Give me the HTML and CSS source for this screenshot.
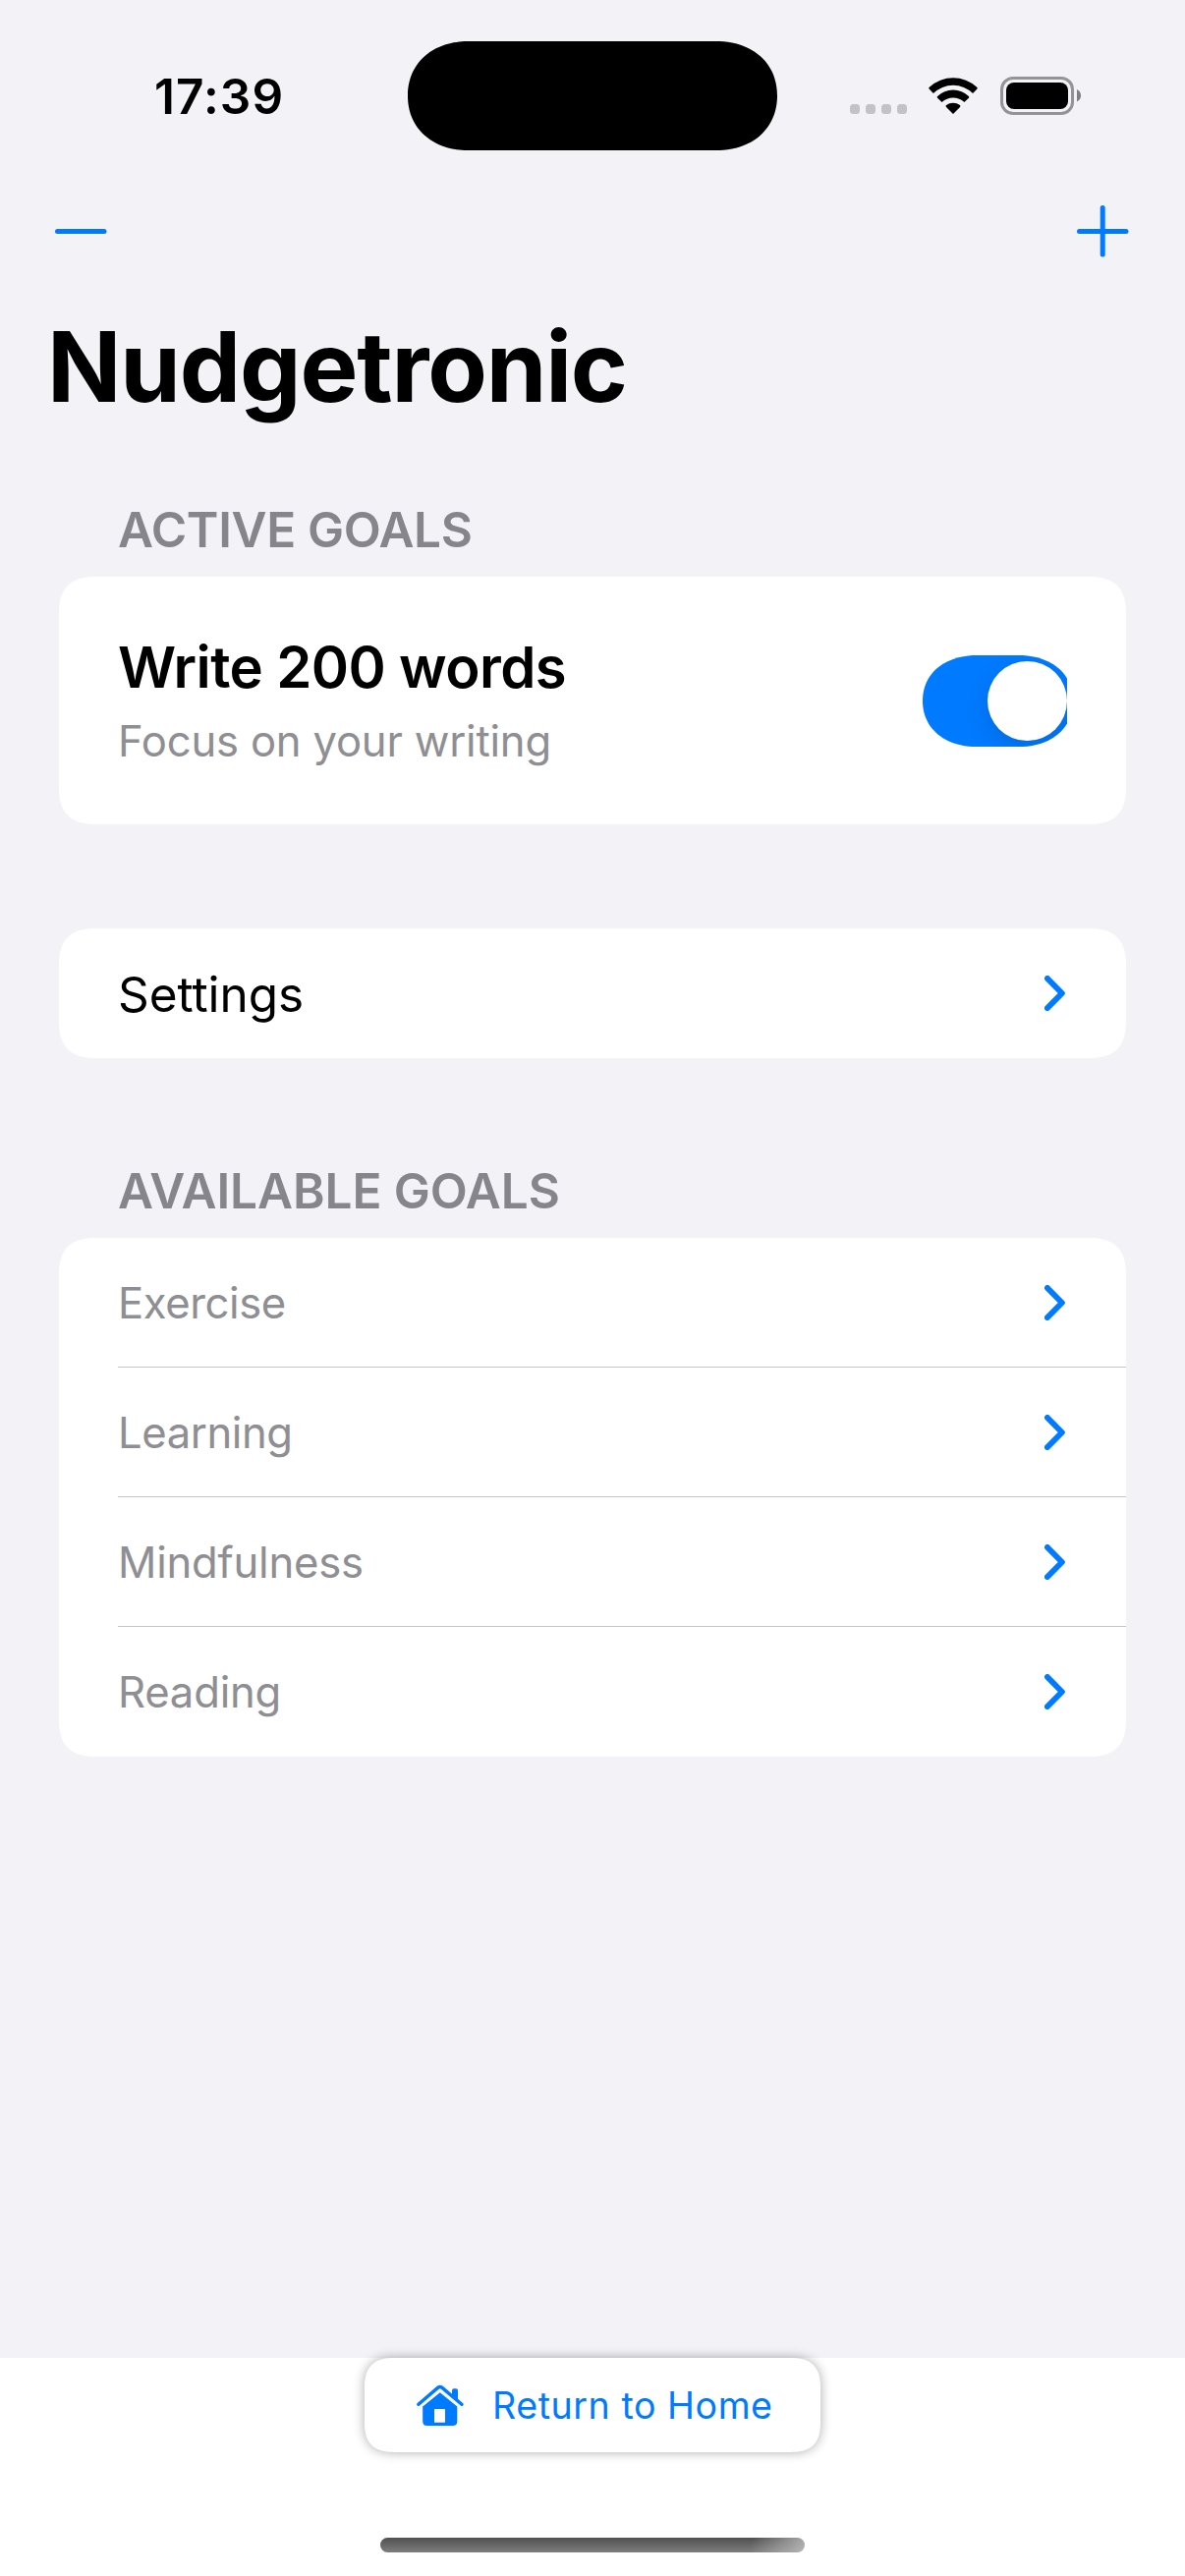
FILE: index.html
```html
<!DOCTYPE html>
<html lang="en">
<head>
<meta charset="utf-8">
<title>Nudgetronic</title>
<link rel="stylesheet" href="styles.css">
</head>
<body>
<svg class="defs" aria-hidden="true">
  <symbol id="chevron" viewBox="0 0 21 36">
    <path d="M3 3L17.8 18L3 33" fill="none" stroke="currentColor" stroke-width="6" stroke-linecap="round" stroke-linejoin="round"/>
  </symbol>
</svg>
<div class="screen">
  <div class="status">
    <span class="time">17:39</span>
    <span class="island"></span>
    <span class="indicators">
      <span class="signal"><i></i><i></i><i></i><i></i></span>
      <svg class="wifi" viewBox="0 0 50 37">
        <path d="M4.9 16A28.6 28.6 0 0 1 45.1 16L49.2 11.8Q50.3 10.8 49.2 9.8A35.5 35.5 0 0 0 .8 9.8Q-.3 10.8 .8 11.8Z"/>
        <path d="M13.6 25A16.4 16.4 0 0 1 36.4 25L40.9 20.8Q41.9 19.9 40.9 18.9A23 23 0 0 0 9.1 18.9Q8.1 19.9 9.1 20.8Z"/>
        <path d="M25 37L18 29.9Q17 28.9 18.1 28.1A11 11 0 0 1 31.9 28.1Q33 28.9 32 29.9Z"/>
      </svg>
      <svg class="battery" viewBox="0 0 82 39">
        <rect x="1.5" y="1.5" width="72" height="36" rx="11.5" fill="none" stroke="#949397" stroke-width="3"/>
        <rect x="6" y="6" width="63" height="27" rx="8"/>
        <path d="M78 13Q82 15 82 19.2T78 25.4Z" fill="#7f7e82"/>
      </svg>
    </span>
  </div>

  <div class="nav">
    <svg class="nav-icon" viewBox="0 0 53 53"><path d="M2.5 26.5H50"/></svg>
    <svg class="nav-icon" viewBox="0 0 53 53"><path d="M2.5 26.5H50M26.2 2.5V50"/></svg>
  </div>

  <h1 class="title">Nudgetronic</h1>

  <main class="list">
    <h2 class="section-title section-active">Active Goals</h2>
    <section class="card card-goal">
      <div class="goal">
        <div class="goal-name">Write 200 words</div>
        <div class="goal-note">Focus on your writing</div>
      </div>
      <div class="toggle-clip"><div class="toggle"><span class="knob"></span></div></div>
    </section>

    <section class="card card-settings">
      <div class="row"><span class="settings-label">Settings</span><svg class="chevron"><use href="#chevron"/></svg></div>
    </section>

    <h2 class="section-title section-available">Available Goals</h2>
    <section class="card">
      <div class="row"><span class="exercise">Exercise</span><svg class="chevron"><use href="#chevron"/></svg></div>
      <div class="row"><span class="learning">Learning</span><svg class="chevron"><use href="#chevron"/></svg></div>
      <div class="row"><span>Mindfulness</span><svg class="chevron"><use href="#chevron"/></svg></div>
      <div class="row"><span>Reading</span><svg class="chevron"><use href="#chevron"/></svg></div>
    </section>
  </main>

  <footer class="footer">
    <div class="home-button">
      <svg class="house" viewBox="0 0 48 42">
        <path d="M1.9 20.3L21.6 3.4Q23.8 1.5 26 3.4L45.9 20.3" fill="none" stroke="currentColor" stroke-width="3.4" stroke-linecap="round" stroke-linejoin="round"/>
        <path d="M36 13V6.3Q36 4.3 38 4.3H40Q42 4.3 42 6.3V18Z"/>
        <path fill-rule="evenodd" d="M6.2 22.5L23.8 8.3L41.3 22.5V37.5Q41.3 42 36.8 42H10.7Q6.2 42 6.2 37.5ZM19 25Q18 25 18 26V38.7H29V26Q29 25 28 25Z"/>
      </svg>
      <span>Return to Home</span>
    </div>
    <div class="home-indicator"></div>
  </footer>
</div>
</body>
</html>
```
FILE: styles.css
```css
* { box-sizing: border-box; }

body {
  margin: 0;
  background: #fff;
  color: #000;
  font-family: Inter, "Liberation Sans", sans-serif;
}

.defs { display: none; }

.screen {
  width: 1206px;
  height: 2622px;
  display: flex;
  flex-direction: column;
  background: #f2f2f7;
}

.status {
  height: 194px;
  display: grid;
  grid-template-columns: 415px 376px 415px;
  align-items: center;
}

.time {
  padding-left: 157px;
  padding-top: 2px;
  font-size: 49.5px;
  line-height: 60px;
  font-weight: 600;
  letter-spacing: 1.1px;
}

.island {
  height: 111px;
  border-radius: 62px / 55.5px;
  corner-shape: superellipse(1.1);
  background: #000;
}

.indicators {
  display: flex;
  align-items: center;
  padding-left: 74px;
  padding-top: 1px;
}

.signal {
  display: flex;
  gap: 6px;
  margin-top: 27px;
}

.signal i {
  width: 10px;
  height: 10px;
  border-radius: 3.5px;
  background: #c3c2c7;
}

.wifi { width: 50px; height: 37px; margin-left: 22px; }

.battery { width: 82px; height: 39px; margin-left: 23px; }

.nav {
  height: 83px;
  display: flex;
  justify-content: space-between;
  align-items: center;
  padding: 0 57px 0 56px;
}

.nav-icon {
  width: 53px;
  height: 53px;
  fill: none;
  stroke: #007aff;
  stroke-width: 5;
  stroke-linecap: round;
}

.title {
  margin: 36px 0 0;
  padding-left: 48px;
  font-size: 99px;
  line-height: 120px;
  font-weight: 700;
  letter-spacing: -1.15px;
}

.list {
  flex: 1;
  padding: 0 60px;
}

.section-title {
  margin: 0 0 18px;
  padding-left: 60px;
  font-size: 49.5px;
  line-height: 60px;
  font-weight: 600;
  text-transform: uppercase;
  color: #86858b;
}

.section-active { margin-top: 76px; letter-spacing: -0.35px; }

.section-available { margin-top: 105px; letter-spacing: -0.06px; }

.card {
  border-radius: 38px;
  corner-shape: superellipse(1.35);
  background: #fff;
  overflow: hidden;
}

.card-goal {
  height: 252px;
  display: flex;
  justify-content: space-between;
  align-items: center;
  padding: 0 60px;
}

.goal-name {
  font-size: 58px;
  line-height: 70px;
  font-weight: 600;
  letter-spacing: -0.6px;
}

.goal-note {
  margin-top: 14px;
  font-size: 43.6px;
  line-height: 54px;
  letter-spacing: -0.2px;
  color: #8e8e93;
}

.toggle-clip {
  width: 147px;
  height: 93px;
  overflow: hidden;
}

.toggle {
  width: 153px;
  height: 93px;
  display: flex;
  justify-content: flex-end;
  padding: 6px;
  border-radius: 55px / 46.5px;
  corner-shape: superellipse(1.1);
  background: #007aff;
  overflow: hidden;
}

.knob {
  width: 81px;
  height: 81px;
  border-radius: 50%;
  background: #fff;
  box-shadow: 0 9px 24px rgba(0, 0, 0, 0.12);
}

.card-settings { margin-top: 106px; }

.row {
  height: 132px;
  display: flex;
  justify-content: space-between;
  align-items: center;
  margin-left: 60px;
  padding-right: 62px;
  font-size: 43.6px;
  letter-spacing: -0.2px;
  color: #8e8e93;
}

.row + .row { box-shadow: 0 -1px #c6c6c8; }

.settings-label {
  padding-top: 1px;
  font-size: 49.5px;
  letter-spacing: -0.06px;
  color: #000;
}

.exercise, .learning { letter-spacing: -0.4px; }

.chevron { width: 21px; height: 36px; color: #007aff; }

.footer {
  height: 222px;
  display: flex;
  flex-direction: column;
  align-items: center;
  background: #fff;
}

.home-button {
  width: 464px;
  height: 96px;
  display: flex;
  align-items: center;
  gap: 29px;
  padding-left: 53px;
  border-radius: 30px;
  corner-shape: superellipse(1.35);
  background: #fff;
  box-shadow: 0 0 12px rgba(0, 0, 0, 0.33);
  color: #007aff;
  font-size: 37.6px;
  letter-spacing: 0.55px;
}

.house { width: 48px; height: 42px; fill: currentColor; }

.home-indicator {
  width: 432px;
  height: 15px;
  margin-top: 87px;
  border-radius: 8px;
  background:
    linear-gradient(105deg, transparent 87%, rgba(190, 190, 190, 0.85) 100%),
    linear-gradient(#505050, #7e7e7e);
}
```
